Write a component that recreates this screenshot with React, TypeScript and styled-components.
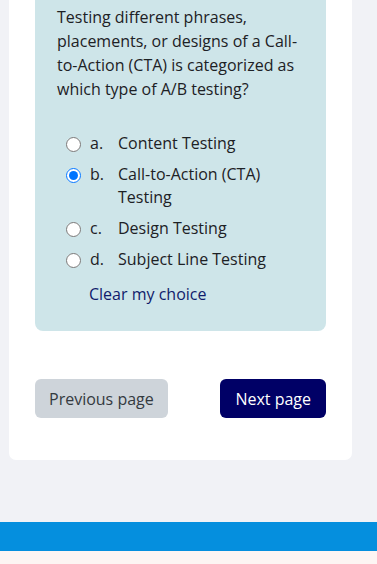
import React from "react";
import styled, { createGlobalStyle } from "styled-components";

const Global = createGlobalStyle`
  html, body { margin: 0; padding: 0; background: #f1f2f6; }
  body { font-family: "Open Sans", "Liberation Sans", sans-serif; color: #1d2125; }
`;

const Page = styled.div`
  display: flex;
  flex-direction: column;
  min-height: 564px;
`;

const Card = styled.div`
  margin: 0 25px 0 9px;
  background: #ffffff;
  border-radius: 0 0 7px 7px;
  padding: 0 26px 42px;
`;

const QuestionBox = styled.div`
  background: #cee5e9;
  border-radius: 0 0 8px 8px;
  padding: 5px 22px 25px;
`;

const QuestionText = styled.p`
  margin: 0 0 31px;
  font-size: 16px;
  line-height: 24px;
`;

const Options = styled.div`
  display: flex;
  flex-direction: column;
  gap: 8px;
  padding-left: 9px;
`;

const Option = styled.label`
  display: grid;
  grid-template-columns: 24px 28px 1fr;
  align-items: start;
  font-size: 16px;
  line-height: 23px;
`;

const Radio = styled.input`
  margin: 5px 0 0;
  width: 15px;
  height: 15px;
`;

const Letter = styled.span``;

const ClearLink = styled.a`
  display: block;
  margin: 12px 0 0 32px;
  font-size: 16px;
  line-height: 23px;
  color: #101c6c;
  text-decoration: none;
`;

const Nav = styled.div`
  display: flex;
  justify-content: space-between;
  margin-top: 48px;
`;

const Button = styled.button<{ $primary?: boolean }>`
  font-family: "Open Sans", "Liberation Sans", sans-serif;
  font-size: 16px;
  height: 39px;
  padding: 0 ${(p) => (p.$primary ? "15px" : "14px")};
  border: none;
  border-radius: 6px;
  background: ${(p) => (p.$primary ? "#000066" : "#ced4da")};
  color: ${(p) => (p.$primary ? "#ffffff" : "#343a40")};
`;

const Spacer = styled.div`
  height: 62px;
`;

const BlueBar = styled.div`
  height: 29px;
  background: #058fde;
`;

const Footer = styled.div`
  flex: 1;
  background: #fdf5f3;
`;

const options = [
  { l: "a.", t: "Content Testing" },
  { l: "b.", t: "Call-to-Action (CTA) Testing", c: true },
  { l: "c.", t: "Design Testing" },
  { l: "d.", t: "Subject Line Testing" },
];

export default function App() {
  return (
    <Page>
      <Global />
      <Card>
        <QuestionBox>
          <QuestionText>
            Testing different phrases, placements, or designs of a Call-to-Action (CTA) is categorized as which type of
            A/B testing?
          </QuestionText>
          <Options>
            {options.map((o) => (
              <Option key={o.l}>
                <Radio type="radio" name="q" defaultChecked={o.c} />
                <Letter>{o.l}</Letter>
                <span>{o.t}</span>
              </Option>
            ))}
          </Options>
          <ClearLink href="#">Clear my choice</ClearLink>
        </QuestionBox>
        <Nav>
          <Button>Previous page</Button>
          <Button $primary>Next page</Button>
        </Nav>
      </Card>
      <Spacer />
      <BlueBar />
      <Footer />
    </Page>
  );
}
